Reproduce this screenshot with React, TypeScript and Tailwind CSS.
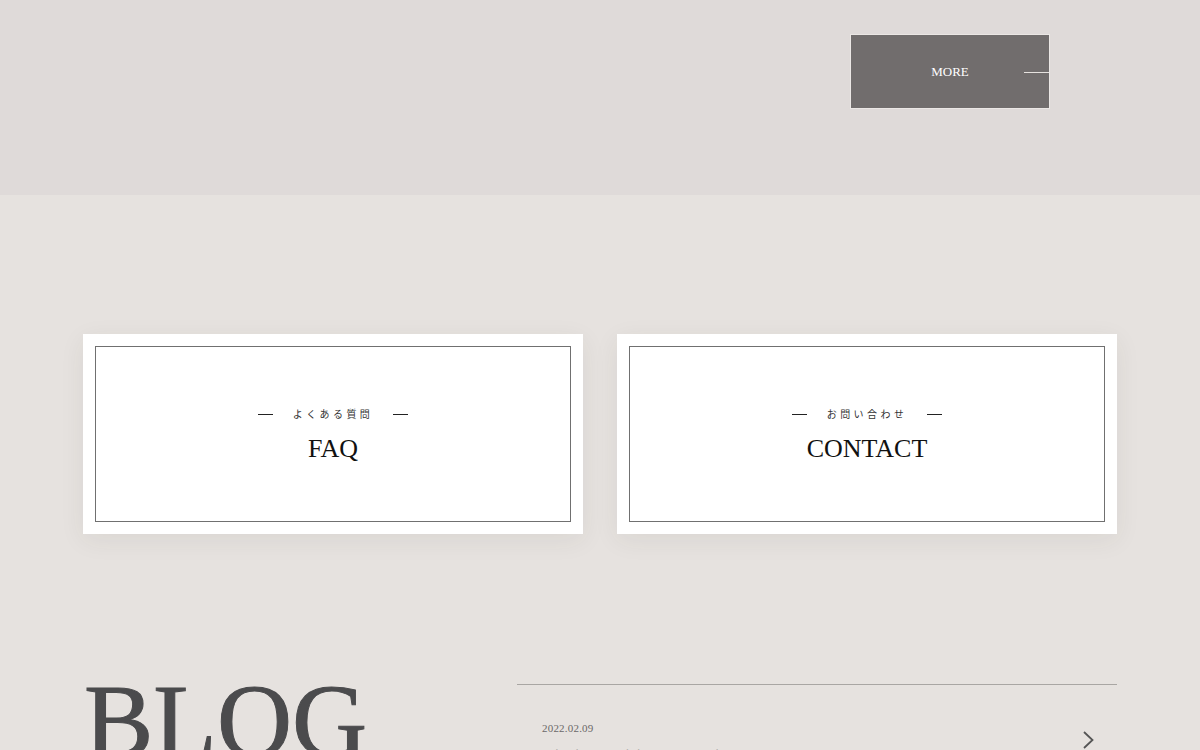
const serif = "font-['Liberation_Serif','Times_New_Roman',serif]";
const jp = "font-['Noto_Sans_CJK_JP',sans-serif]";

function LinkCard({ label, title }: { label: string; title: string }) {
  return (
    <a
      href="#"
      className="block h-[200px] w-[500px] bg-white p-[12px] shadow-[0_6px_24px_rgba(60,50,40,0.07)]"
    >
      <div className="flex h-full flex-col items-center justify-center border border-[#707070] pt-[3px]">
        <div className="flex items-center gap-[20px]">
          <span className="h-px w-[15px] bg-[#222]" />
          <span className={`${jp} text-[10px] leading-[14px] tracking-[3.4px] text-[#333]`}>
            {label}
          </span>
          <span className="h-px w-[15px] bg-[#222]" />
        </div>
        <p className={`${serif} mt-[13px] text-[26px] leading-[30px] text-[#111]`}>{title}</p>
      </div>
    </a>
  );
}

export default function App() {
  return (
    <main className="min-h-[750px] overflow-hidden bg-[#e6e2df]">
      <section className="flex h-[195px] justify-end bg-[#dfdad9] pr-[150px] pt-[34px]">
        <a
          href="#"
          className="relative flex h-[75px] w-[200px] items-center justify-center border border-[#ebe7e5] bg-[#716d6d]"
        >
          <span className={`${serif} text-[13px] text-white`}>MORE</span>
          <span className="absolute right-0 top-[37px] h-px w-[25px] bg-[#e6e2df]" />
        </a>
      </section>

      <section className="flex justify-center gap-[34px] pt-[139px]">
        <LinkCard label="よくある質問" title="FAQ" />
        <LinkCard label="お問い合わせ" title="CONTACT" />
      </section>

      <section className="mx-auto mt-[150px] flex w-[1034px] items-start">
        <div className="w-[434px] shrink-0">
          <h2
            className={`${serif} -mt-[15px] ml-[1px] text-[104px] leading-none text-[#4b4b4d] [-webkit-text-stroke:1px_#4b4b4d]`}
          >
            BLOG
          </h2>
        </div>
        <ul className="w-[600px] border-t border-[#a9a6a3]">
          <li>
            <a href="#" className="flex items-start justify-between pl-[25px] pr-[23px] pt-[35px]">
              <div>
                <p className={`${serif} text-[11px] leading-[16px] tracking-[0.2px] text-[#6b6868]`}>
                  2022.02.09
                </p>
                <p className={`${jp} mt-[10px] text-[14px] font-bold leading-[18px] text-[#222]`}>
                  Wishing to visit our wedding venue
                </p>
              </div>
              <svg
                className="mt-[11px] h-[18px] w-[11px] text-[#555]"
                viewBox="0 0 11 18"
                fill="none"
                stroke="currentColor"
                strokeWidth={1.8}
              >
                <polyline points="1,1 9.5,9 1,17" />
              </svg>
            </a>
          </li>
        </ul>
      </section>
    </main>
  );
}
